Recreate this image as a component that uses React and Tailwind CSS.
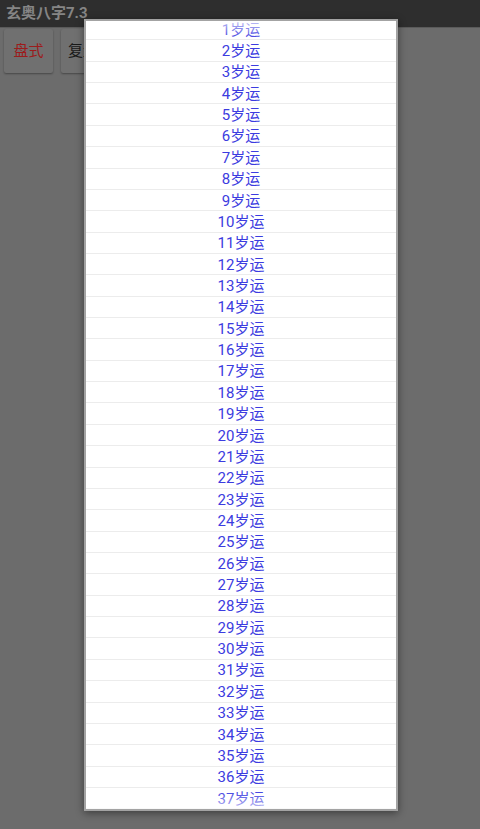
import React from "react";

const ages = Array.from({ length: 37 }, (_, i) => i + 1);

const App = () => {
  return (
    <div
      className="relative w-[480px] h-[829px] overflow-hidden bg-[#6c6c6c]"
      style={{ fontFamily: "Roboto, 'Noto Sans CJK SC', sans-serif" }}
    >
      {/* dimmed page behind the dialog */}
      <div className="h-[28px] bg-[#2e2e2e] border-b border-[#5a5a5a] flex items-center px-[6px]">
        <span className="text-[15px] font-bold text-[#858585] leading-none">玄奥八字7.3</span>
      </div>
      <div className="flex gap-[8px] px-[4px] pt-[1px]">
        <div className="w-[49px] h-[44px] bg-[#707070] rounded-[2px] shadow-[0_1px_2px_rgba(0,0,0,0.35)] flex items-center justify-center text-[15px] text-[#9c1c1c]">
          盘式
        </div>
        <div className="w-[60px] h-[44px] bg-[#707070] rounded-[2px] shadow-[0_1px_2px_rgba(0,0,0,0.35)] flex items-center pl-[7px] text-[15px] text-[#1a1a1a]">
          复盘
        </div>
      </div>

      {/* dialog list */}
      <div className="absolute left-[84px] top-[19px] w-[314px] h-[792px] border-2 border-[#a3a3a3] bg-white shadow-[0_2px_8px_rgba(0,0,0,0.45)] overflow-hidden">
        <div className="relative h-full overflow-hidden">
          <div className="-mt-[2px]">
            {ages.map((a) => (
              <div
                key={a}
                className="h-[21.36px] pt-[2px] border-b border-[#ececec] flex items-center justify-center text-[15px] leading-none text-[#3c3ce0]"
              >
                {a}岁运
              </div>
            ))}
          </div>
          <div className="absolute left-0 right-0 top-0 h-[18px] bg-gradient-to-b from-white/70 to-transparent" />
          <div className="absolute left-0 right-0 bottom-0 h-[18px] bg-gradient-to-t from-white/70 to-transparent" />
        </div>
      </div>
    </div>
  );
};

export default App;
